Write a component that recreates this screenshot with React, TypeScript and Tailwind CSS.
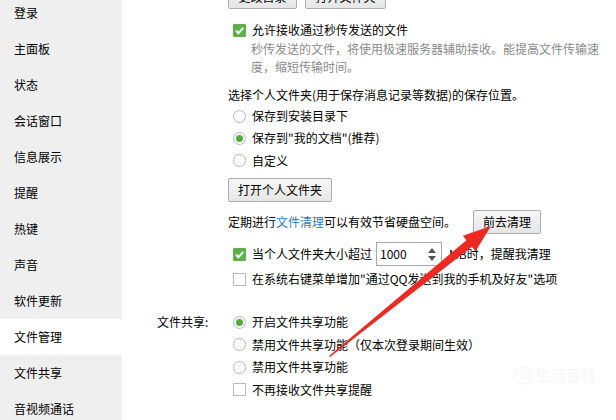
const sideItems = [
  '登录',
  '主面板',
  '状态',
  '会话窗口',
  '信息展示',
  '提醒',
  '热键',
  '声音',
  '软件更新',
  '文件管理',
  '文件共享',
  '音视频通话',
]

function Check({ on }: { on?: boolean }) {
  if (on) {
    return (
      <span className="ml-[5px] mr-[6px] flex h-[13px] w-[13px] shrink-0 items-center justify-center rounded-[1px] bg-[#5db14a]">
        <svg width="11" height="11" viewBox="0 0 11 11">
          <path d="M2 5.8 L4.4 8.2 L9.2 2.8" fill="none" stroke="#fff" strokeWidth="2" />
        </svg>
      </span>
    )
  }
  return (
    <span className="ml-[5px] mr-[6px] h-[13px] w-[13px] shrink-0 border border-[#b9b9b9] bg-white" />
  )
}

function Radio({ on }: { on?: boolean }) {
  return (
    <span className="ml-[5px] mr-[6px] flex h-[13px] w-[13px] shrink-0 items-center justify-center rounded-full border border-[#b5b5b5] bg-white">
      {on && <span className="h-[7px] w-[7px] rounded-full bg-[#4fae3a]" />}
    </span>
  )
}

function Btn({ label, w }: { label: string; w: string }) {
  return (
    <button
      className={`${w} flex h-[24px] shrink-0 items-center justify-center rounded-[2px] border border-[#acacac] bg-gradient-to-b from-[#f7f7f7] to-[#e6e6e6] text-[12px] text-black`}
    >
      {label}
    </button>
  )
}

export default function App() {
  return (
    <div className="relative flex h-[420px] w-[616px] overflow-hidden bg-white font-['Noto_Sans_CJK_SC',sans-serif] text-[12px] text-black">
      <aside className="w-[122px] shrink-0 bg-[#efefef]">
        <div className="-mt-[5px]">
          {sideItems.map((item) => (
            <div
              key={item}
              className={`flex h-[36px] items-center pl-[14px] text-[12px] ${item === '文件管理' ? 'bg-white' : ''}`}
            >
              {item}
            </div>
          ))}
        </div>
      </aside>

      <main className="flex-1 pl-[106px] leading-[18px]">
        <div className="-mt-[15px] flex gap-[8px]">
          <Btn label="更改目录" w="w-[69px]" />
          <Btn label="打开文件夹" w="w-[81px]" />
        </div>

        <div className="mt-[12px] flex h-[18px] items-center">
          <Check on />
          <span>允许接收通过秒传发送的文件</span>
        </div>
        <p className="mt-[1px] w-[374px] pl-[23px] text-[#8a8a8a]">
          秒传发送的文件，将使用极速服务器辅助接收。能提高文件传输速度，缩短传输时间。
        </p>

        <div className="mt-[10px] h-[18px]">选择个人文件夹(用于保存消息记录等数据)的保存位置。</div>
        <div className="mt-[1px]">
          <div className="flex h-[22px] items-center">
            <Radio />
            <span>保存到安装目录下</span>
          </div>
          <div className="flex h-[22.5px] items-center">
            <Radio on />
            <span>保存到"我的文档"(推荐)</span>
          </div>
          <div className="flex h-[22.5px] items-center">
            <Radio />
            <span>自定义</span>
          </div>
        </div>

        <div className="mt-[6px]">
          <Btn label="打开个人文件夹" w="w-[104px]" />
        </div>

        <div className="mt-[8px] flex h-[24px] items-center">
          <span>
            定期进行<span className="text-[#2b7cc1]">文件清理</span>可以有效节省硬盘空间。
          </span>
          <span className="ml-[17px]">
            <Btn label="前去清理" w="w-[68px]" />
          </span>
        </div>

        <div className="mt-[8px] flex h-[24px] items-center">
          <Check on />
          <span>当个人文件夹大小超过</span>
          <div className="ml-[4px] flex h-[24px] w-[66px] items-start justify-between border border-[#a9a9a9] bg-white pl-[3px] pr-[5px]">
            <span className="mt-[2px]">1000</span>
            <div className="flex h-full flex-col items-center justify-center gap-[3px]">
              <svg width="8" height="5" viewBox="0 0 8 5">
                <path d="M0 5 L4 0 L8 5 Z" fill="#555" />
              </svg>
              <svg width="8" height="5" viewBox="0 0 8 5">
                <path d="M0 0 L8 0 L4 5 Z" fill="#555" />
              </svg>
            </div>
          </div>
          <span className="ml-[7px]">MB时，提醒我清理</span>
        </div>

        <div className="mt-[4px] flex h-[18px] items-center">
          <Check />
          <span>在系统右键菜单增加"通过QQ发送到我的手机及好友"选项</span>
        </div>

        <div className="-ml-[71px] mt-[23px] flex">
          <div className="flex h-[22.5px] w-[71px] items-center">文件共享:</div>
          <div>
            <div className="flex h-[22.5px] items-center">
              <Radio on />
              <span>开启文件共享功能</span>
            </div>
            <div className="flex h-[22.5px] items-center">
              <Radio />
              <span>禁用文件共享功能（仅本次登录期间生效）</span>
            </div>
            <div className="flex h-[22.5px] items-center">
              <Radio />
              <span>禁用文件共享功能</span>
            </div>
            <div className="flex h-[22.5px] items-center">
              <Check />
              <span>不再接收文件共享提醒</span>
            </div>
          </div>
        </div>
      </main>

      {/* watermark */}
      <div className="pointer-events-none absolute left-[514px] top-[364px] flex items-center gap-[3px] text-[15px] font-bold text-[#f8f8f8]">
        <span className="flex h-[19px] w-[19px] items-center justify-center rounded-full border-2 border-[#f8f8f8] text-[12px]">S</span>
        <span>生活百科</span>
      </div>

      {/* red annotation arrow */}
      <svg className="pointer-events-none absolute left-0 top-0" width="616" height="420" viewBox="0 0 616 420">
        <polygon
          points="329,356 466.4,240.2 462.9,235.7 491,226 475.5,251.3 471.9,246.8 330,357"
          fill="#ee2922"
        />
      </svg>
    </div>
  )
}
